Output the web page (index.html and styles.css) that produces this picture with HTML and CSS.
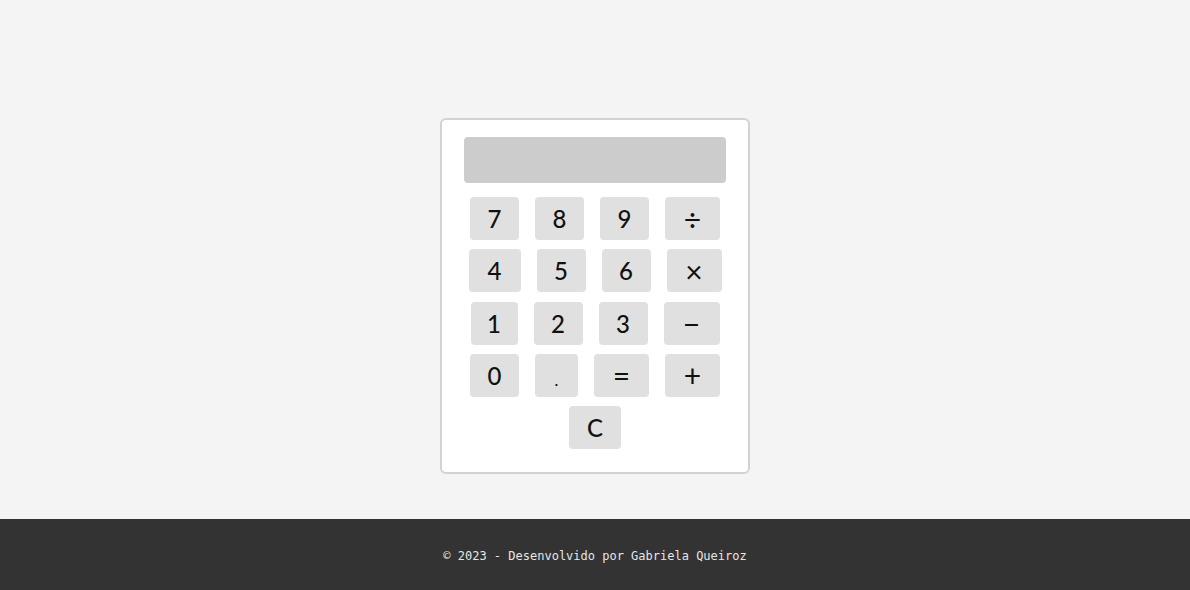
FILE: index.html
```html
<!DOCTYPE html>
<html lang="pt-BR">
<head>
<meta charset="utf-8">
<title>Calculadora</title>
<link rel="stylesheet" href="styles.css">
</head>
<body>
<main class="main">
  <div class="calc">
    <div class="display"></div>
    <div class="keys">
      <div class="row">
        <button class="key">7</button>
        <button class="key">8</button>
        <button class="key">9</button>
        <button class="key op">÷</button>
      </div>
      <div class="row">
        <button class="key w52">4</button>
        <button class="key">5</button>
        <button class="key">6</button>
        <button class="key op w52">×</button>
      </div>
      <div class="row">
        <button class="key narrow">1</button>
        <button class="key">2</button>
        <button class="key">3</button>
        <button class="key op minus">−</button>
      </div>
      <div class="row">
        <button class="key">0</button>
        <button class="key dot">.</button>
        <button class="key op">=</button>
        <button class="key op">+</button>
      </div>
      <div class="row">
        <button class="key w52">C</button>
      </div>
    </div>
  </div>
</main>
<footer class="footer">© 2023 - Desenvolvido por Gabriela Queiroz</footer>
</body>
</html>
```
FILE: styles.css
```css
* { box-sizing: border-box; }
html, body { margin: 0; padding: 0; }
body {
  background: #f4f4f4;
  font-family: "Lato", "Noto Sans", sans-serif;
  height: 590px;
  display: flex;
  flex-direction: column;
}
.main {
  flex: 1;
  display: flex;
  justify-content: center;
  align-items: flex-start;
  padding-top: 118px;
}
.calc {
  width: 310px;
  background: #fff;
  border: 2px solid #d2d2d2;
  border-radius: 6px;
  padding: 17px 22px 23px;
}
.display {
  height: 46px;
  background: #cccccc;
  border-radius: 4px;
  margin-bottom: 14px;
}
.keys {
  display: flex;
  flex-direction: column;
  gap: 9.25px;
}
.row {
  display: flex;
  justify-content: center;
  gap: 16px;
}
.key {
  width: 49px;
  height: 43px;
  border: none;
  border-radius: 4px;
  background: #e0e0e0;
  color: #111;
  font-family: "Lato", "Noto Sans", sans-serif;
  font-size: 24px;
  font-weight: 500;
  padding: 0;
  display: flex;
  align-items: center;
  justify-content: center;
}
.w52 { width: 52px; }
.narrow { width: 47px; }
.op { width: 55px; font-size: 30px; font-weight: 400; }
.minus { width: 56px; }
.dot { width: 43px; font-size: 16px; padding-top: 8px; }
.footer {
  height: 71px;
  background: #333;
  color: #e6e6e6;
  font-family: "DejaVu Sans Mono", "Liberation Mono", monospace;
  font-size: 12px;
  padding-top: 2px;
  display: flex;
  align-items: center;
  justify-content: center;
}
```
